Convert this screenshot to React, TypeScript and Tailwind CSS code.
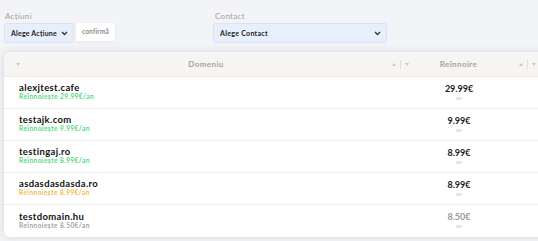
import React from 'react';

const rows = [
  { name: 'alexjtest.cafe', renew: 'Reînnoiește 29.99€/an', price: '29.99€', tone: 'green' },
  { name: 'testajk.com', renew: 'Reînnoiește 9.99€/an', price: '9.99€', tone: 'green' },
  { name: 'testingaj.ro', renew: 'Reînnoiește 8.99€/an', price: '8.99€', tone: 'green' },
  { name: 'asdasdasdasda.ro', renew: 'Reînnoiește 8.99€/an', price: '8.99€', tone: 'orange' },
  { name: 'testdomain.hu', renew: 'Reînnoiește 8.50€/an', price: '8.50€', tone: 'gray' },
];

const Up = () => (
  <svg width="4" height="3" viewBox="0 0 4 3">
    <path d="M2 0L4 3H0z" fill="#cdc8c3" />
  </svg>
);

const Down = () => (
  <svg width="4" height="3" viewBox="0 0 4 3">
    <path d="M0 0H4L2 3z" fill="#cdc8c3" />
  </svg>
);

const SortArrows = () => (
  <div className="flex items-center gap-[4px]">
    <Up />
    <span className="h-[9px] w-px bg-[#e2ded9]" />
    <Down />
  </div>
);

const Chevron = () => (
  <svg width="7" height="5" viewBox="0 0 7 5" className="shrink-0 text-[#333]">
    <path d="M1 1l2.5 2.5L6 1" fill="none" stroke="currentColor" strokeWidth="1.3" />
  </svg>
);

export default function App() {
  return (
    <div
      className="w-[538px] h-[241px] overflow-hidden bg-[#f3f4f8]"
      style={{ fontFamily: 'Lato, "Noto Sans", sans-serif' }}
    >
      {/* Filters */}
      <div className="flex pl-[4px] pt-[12px]">
        <div className="flex flex-col">
          <label className="text-[8px] leading-[8px] tracking-[0.3px] text-[#a79e95] ml-[1px] mb-[3px]">Acțiuni</label>
          <div className="flex items-start gap-[2px]">
            <div className="flex h-[20px] w-[70px] items-center justify-between rounded-[2px] border border-[#d9e3f6] bg-[#e7eefc] pl-[6px] pr-[5px]">
              <span className="whitespace-nowrap text-[7px] font-bold tracking-[0.2px] text-[#222]">Alege Acțiune</span>
              <Chevron />
            </div>
            <button className="h-[18px] w-[39px] whitespace-nowrap rounded-[2px] bg-white text-[6.5px] font-bold tracking-[0.2px] text-[#8c8c8c] shadow-[0_1px_3px_rgba(0,0,0,0.06)]">
              confirmă
            </button>
          </div>
        </div>
        <div className="ml-[98px] flex flex-col">
          <label className="text-[8px] leading-[8px] tracking-[0.3px] text-[#a79e95] ml-[2px] mb-[3px]">Contact</label>
          <div className="flex h-[20px] w-[174px] items-center justify-between rounded-[2px] border border-[#d9e3f6] bg-[#e7eefc] pl-[6px] pr-[5px]">
            <span className="whitespace-nowrap text-[7px] font-bold tracking-[0.3px] text-[#222]">Alege Contact</span>
            <Chevron />
          </div>
        </div>
      </div>

      {/* Table card */}
      <div className="ml-[4px] mt-[9px] w-[600px] rounded-[6px] bg-white shadow-[0_0_8px_rgba(0,0,0,0.12)] overflow-hidden">
        <div className="flex h-[25px] items-center bg-[#f6f5f3] border-b border-[#ece9e6]">
          <div className="flex w-[406px] items-center pl-[12px] pr-[1px]">
            <Down />
            <span className="flex-1 text-center text-[8px] font-bold tracking-[0.4px] text-[#aaa29a]">Domeniu</span>
            <SortArrows />
          </div>
          <div className="flex w-[127px] items-center pr-[1px]">
            <span className="flex-1 pr-[12px] text-center text-[8px] font-bold tracking-[0.4px] text-[#aaa29a]">Reînnoire</span>
            <SortArrows />
          </div>
          <div className="flex-1" />
        </div>
        {rows.map((r, i) => (
          <div
            key={r.name}
            className={`flex h-[32px] items-center pb-[2px] ${i < rows.length - 1 ? 'border-b border-[#eeeeee]' : ''}`}
          >
            <div className="w-[406px] pl-[15px] flex flex-col">
              <span className="text-[9.5px] leading-[11px] font-bold tracking-[0.35px] text-[#111]">{r.name}</span>
              <span
                className={`text-[6.5px] leading-[8px] font-bold tracking-[0.45px] ${
                  r.tone === 'green' ? 'text-[#4fd981]' : r.tone === 'orange' ? 'text-[#f7b84a]' : 'text-[#a3a3a3]'
                }`}
              >
                {r.renew}
              </span>
            </div>
            <div className="w-[127px] pr-[29px] flex flex-col items-center">
              <span className={`text-[9px] leading-[11px] font-bold ${r.tone === 'gray' ? 'text-[#9a9a9a]' : 'text-[#1a1a1a]'}`}>
                {r.price}
              </span>
              <span className="text-[6px] leading-[7px] italic text-[#cfc8c0]">an</span>
            </div>
          </div>
        ))}
      </div>
    </div>
  );
}
